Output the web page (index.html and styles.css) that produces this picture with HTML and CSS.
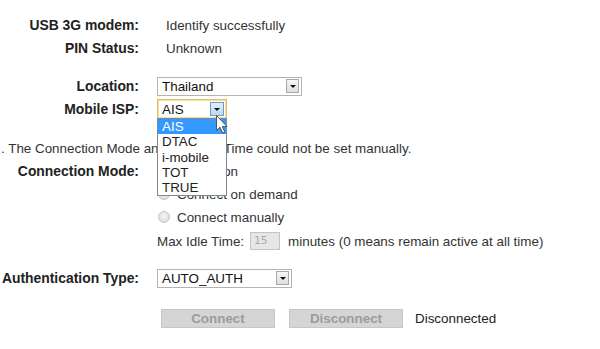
FILE: index.html
```html
<!DOCTYPE html>
<html>
<head>
<meta charset="utf-8">
<link rel="stylesheet" href="styles.css">
</head>
<body>
<div class="form">
  <div class="row">
    <div class="label">USB 3G modem:</div>
    <div class="value indent">Identify successfully</div>
  </div>
  <div class="row">
    <div class="label">PIN Status:</div>
    <div class="value indent">Unknown</div>
  </div>
  <div class="row sp15">
    <div class="label">Location:</div>
    <div class="value">
      <div class="select sel-location"><span class="sel-text">Thailand</span><span class="arrow"><span class="tri"></span></span></div>
    </div>
  </div>
  <div class="row">
    <div class="label">Mobile ISP:</div>
    <div class="value">
      <div class="isp-wrap">
        <div class="select sel-isp focus"><span class="sel-text">AIS</span><span class="arrow hot"><span class="tri"></span></span></div>
        <ul class="popup">
          <li class="opt active">AIS</li>
          <li class="opt">DTAC</li>
          <li class="opt">i-mobile</li>
          <li class="opt">TOT</li>
          <li class="opt">TRUE</li>
        </ul>
        <svg class="cursor" width="12" height="19" viewBox="0 0 12 19">
          <path d="M0.5 0.5 L0.5 15.5 L4 12.2 L6.6 18 L8.8 17 L6.3 11.5 L11 11.5 Z" fill="#fff" stroke="#555" stroke-width="1" stroke-linejoin="round"/>
        </svg>
      </div>
    </div>
  </div>
  <div class="row sp16 msg">. The Connection Mode and Max Idle Time could not be set manually.</div>
  <div class="row">
    <div class="label">Connection Mode:</div>
    <div class="value"><span class="radio"></span>Always on</div>
  </div>
  <div class="row">
    <div class="label"></div>
    <div class="value"><span class="radio"></span>Connect on demand</div>
  </div>
  <div class="row">
    <div class="label"></div>
    <div class="value"><span class="radio"></span>Connect manually</div>
  </div>
  <div class="row tall">
    <div class="label"></div>
    <div class="value">Max Idle Time:<span class="idle">15</span>minutes (0 means remain active at all time)</div>
  </div>
  <div class="row sp13">
    <div class="label">Authentication Type:</div>
    <div class="value">
      <div class="select sel-auth"><span class="sel-text">AUTO_AUTH</span><span class="arrow"><span class="tri"></span></span></div>
    </div>
  </div>
  <div class="row sp17">
    <div class="label"></div>
    <div class="value buttons">
      <button class="btn">Connect</button>
      <button class="btn">Disconnect</button>
      <span class="status">Disconnected</span>
    </div>
  </div>
</div>
</body>
</html>
```

FILE: styles.css
```css
html, body {
  margin: 0;
  padding: 0;
  background: #ffffff;
}
body {
  font-family: "Liberation Sans", Arial, sans-serif;
  font-size: 13.4px;
  color: #333333;
  width: 600px;
  height: 349px;
  overflow: hidden;
}
.form {
  display: flex;
  flex-direction: column;
  gap: 1px;
  padding-top: 14px;
}
.row {
  display: flex;
  align-items: center;
  height: 22px;
}
.row.tall { height: 24px; }
.sp15 { margin-top: 15px; }
.sp16 { margin-top: 16px; }
.sp13 { margin-top: 13px; }
.sp17 { margin-top: 17px; }
.label {
  width: 139px;
  padding-right: 1px;
  text-align: right;
  font-weight: bold;
  font-size: 13.9px;
  color: #222222;
  flex: none;
}
.value {
  margin-left: 17px;
  display: flex;
  align-items: center;
  white-space: nowrap;
}
.value.indent { margin-left: 26px; }
.msg {
  padding-left: 1px;
  white-space: nowrap;
}

.select {
  position: relative;
  box-sizing: border-box;
  height: 19px;
  border: 1px solid #b4b4b4;
  background: #ffffff;
  display: flex;
  align-items: center;
  color: #111111;
}
.sel-text { padding-left: 4px; flex: 1; }
.sel-location { width: 145px; }
.sel-isp { width: 70px; height: 20px; }
.sel-auth { width: 135px; }
.select.focus {
  border-color: #e3bf62;
  box-shadow: 0 0 0 1px #f3dfa6 inset;
}
.arrow {
  box-sizing: border-box;
  width: 13px;
  height: 14px;
  margin-right: 2px;
  border: 1px solid #a9a9a9;
  background: linear-gradient(#f6f6f6, #dedede);
  display: flex;
  align-items: center;
  justify-content: center;
}
.arrow.hot {
  width: 14px;
  border-color: #6a9ccc;
  background: linear-gradient(#e4f0fb, #bcd7f0);
}
.tri {
  width: 0;
  height: 0;
  border-left: 3px solid transparent;
  border-right: 3px solid transparent;
  border-top: 3px solid #111111;
}

.isp-wrap { position: relative; }
.popup {
  position: absolute;
  left: 0;
  top: 19px;
  width: 68px;
  margin: 0;
  padding: 0;
  list-style: none;
  background: #ffffff;
  border: 1px solid #7a8a9a;
  z-index: 5;
}
.opt {
  height: 15.3px;
  line-height: 15px;
  padding-left: 4px;
  color: #222222;
}
.opt.active {
  background: #3399ff;
  color: #ffffff;
}
.cursor {
  position: absolute;
  left: 59px;
  top: 16px;
  z-index: 6;
}

.radio {
  box-sizing: border-box;
  width: 12px;
  height: 12px;
  border-radius: 50%;
  border: 1px solid #c4c4c4;
  background: radial-gradient(circle at 50% 40%, #f4f4f4, #d9d9d9);
  margin-left: 1px;
  margin-right: 7px;
  flex: none;
}

.idle {
  box-sizing: border-box;
  width: 30px;
  height: 18px;
  margin: 0 8px 0 6px;
  border: 1px solid #c4c4c4;
  background: #e6e6e6;
  color: #a8a8a8;
  font-size: 11px;
  font-family: "DejaVu Sans Mono", monospace;
  padding-left: 3px;
  line-height: 16px;
}

.buttons { margin-left: 21px; }
.btn {
  box-sizing: border-box;
  width: 114px;
  height: 19px;
  margin: 0 14px 0 0;
  padding: 0;
  border: 1px solid #c6c6c6;
  background: #d5d5d5;
  color: #9c9c9c;
  font-family: "Liberation Sans", Arial, sans-serif;
  font-size: 13.4px;
  font-weight: bold;
}
.status {
  margin-left: -2px;
  color: #222222;
}
```
